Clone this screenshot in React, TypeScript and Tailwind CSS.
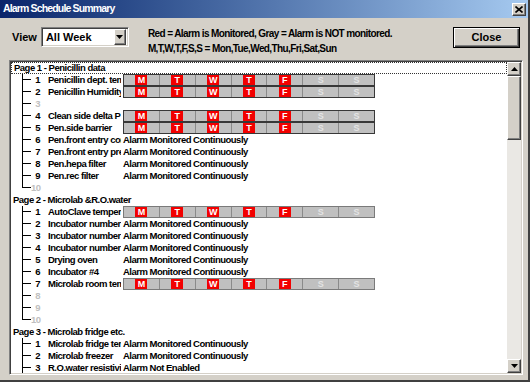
import React from 'react';

// Alarm Schedule Summary – Win2000 style dialog

type Status = 'bar' | 'cont' | 'off';

type Row =
  | { kind: 'page'; label: string; focus?: boolean }
  | { kind: 'item'; n: number; name?: string; status?: Status; last?: boolean; tone?: 'dark' | 'light' };

const rows: Row[] = [
  { kind: 'page', label: 'Page 1 - Penicillin data', focus: true },
  { kind: 'item', n: 1, name: 'Penicillin dept. temp', status: 'bar', tone: 'dark' },
  { kind: 'item', n: 2, name: 'Penicillin Humidity', status: 'bar', tone: 'dark' },
  { kind: 'item', n: 3 },
  { kind: 'item', n: 4, name: 'Clean side delta P', status: 'bar', tone: 'dark' },
  { kind: 'item', n: 5, name: 'Pen.side barrier', status: 'bar', tone: 'dark' },
  { kind: 'item', n: 6, name: 'Pen.front entry corridor', status: 'cont' },
  { kind: 'item', n: 7, name: 'Pen.front entry pressure', status: 'cont' },
  { kind: 'item', n: 8, name: 'Pen.hepa filter', status: 'cont' },
  { kind: 'item', n: 9, name: 'Pen.rec filter', status: 'cont' },
  { kind: 'item', n: 10, last: true },
  { kind: 'page', label: 'Page 2 - Microlab &R.O.water' },
  { kind: 'item', n: 1, name: 'AutoClave temperature', status: 'bar', tone: 'light' },
  { kind: 'item', n: 2, name: 'Incubator number 1', status: 'cont' },
  { kind: 'item', n: 3, name: 'Incubator number 2', status: 'cont' },
  { kind: 'item', n: 4, name: 'Incubator number 3', status: 'cont' },
  { kind: 'item', n: 5, name: 'Drying oven', status: 'cont' },
  { kind: 'item', n: 6, name: 'Incubator #4', status: 'cont' },
  { kind: 'item', n: 7, name: 'Microlab room temp', status: 'bar', tone: 'light' },
  { kind: 'item', n: 8 },
  { kind: 'item', n: 9 },
  { kind: 'item', n: 10, last: true },
  { kind: 'page', label: 'Page 3 - Microlab fridge etc.' },
  { kind: 'item', n: 1, name: 'Microlab fridge temp', status: 'cont' },
  { kind: 'item', n: 2, name: 'Microlab freezer', status: 'cont' },
  { kind: 'item', n: 3, name: 'R.O.water resistivity', status: 'off' },
];

const days = [
  { d: 'M', on: true },
  { d: 'T', on: true },
  { d: 'W', on: true },
  { d: 'T', on: true },
  { d: 'F', on: true },
  { d: 'S', on: false },
  { d: 'S', on: false },
];

const raised =
  'border border-t-white border-l-white border-r-[#404040] border-b-[#404040] shadow-[inset_-1px_-1px_#808080] bg-[#d4d0c8]';
const sunken =
  'border border-t-[#808080] border-l-[#808080] border-r-white border-b-white shadow-[inset_1px_1px_#404040,inset_-1px_-1px_#d4d0c8]';

function ScheduleBar({ tone }: { tone?: 'dark' | 'light' }) {
  return (
    <div
      className={`flex h-[12px] w-[252px] shrink-0 border tracking-normal ${
        tone === 'dark' ? 'border-[#383838]' : 'border-[#7a7a7a]'
      }`}
    >
      {days.map((day, i) => (
        <div
          key={i}
          className={`flex flex-1 justify-center bg-[#c0c0c0] ${i > 0 ? 'border-l border-[#8a8a8a]' : ''}`}
        >
          <span
            className={`w-[12px] text-center text-[9px] leading-[10px] ${
              day.on ? 'bg-[#f20000] text-white' : 'text-[#e4e4e4]'
            }`}
          >
            {day.d}
          </span>
        </div>
      ))}
    </div>
  );
}

function TreeRow({ row }: { row: Row }) {
  if (row.kind === 'page') {
    return (
      <div
        className={`flex h-[12px] items-center pl-[2px] leading-[12px] ${
          row.focus ? 'border border-dotted border-[#333]' : ''
        }`}
      >
        {row.label}
      </div>
    );
  }
  const empty = !row.name;
  return (
    <div className="flex h-[12px] items-center leading-[12px]">
      <div className="ml-[11px] flex h-full w-[9px] shrink-0 flex-col">
        <div className="h-[6px] border-b border-l border-black" />
        <div className={`flex-1 ${row.last ? '' : 'border-l border-black'}`} />
      </div>
      <span className={`w-[9px] shrink-0 text-right ${empty ? 'text-[#c0c0c0]' : ''}`}>{row.n}</span>
      <span className="ml-[8px] mr-[2px] w-[73px] shrink-0 overflow-hidden whitespace-nowrap">{row.name}</span>
      {row.status === 'bar' && <ScheduleBar tone={row.tone} />}
      {row.status === 'cont' && <span className="whitespace-nowrap">Alarm Monitored Continuously</span>}
      {row.status === 'off' && <span className="whitespace-nowrap">Alarm Not Enabled</span>}
    </div>
  );
}

function Arrow({ up }: { up?: boolean }) {
  return (
    <svg width="7" height="4" viewBox="0 0 7 4">
      <path d={up ? 'M3.5 0 L7 4 L0 4 Z' : 'M0 0 L7 0 L3.5 4 Z'} fill="#000" />
    </svg>
  );
}

export default function App() {
  return (
    <div className="flex h-[382px] w-[530px] flex-col overflow-hidden border-r-2 border-b-2 border-r-[#404040] border-b-[#404040] bg-[#d4d0c8] font-['Liberation_Sans',Arial,sans-serif] font-bold text-black">
      {/* title bar */}
      <div className="flex h-[18px] shrink-0 items-center justify-between bg-linear-to-r from-[#0a246a] to-[#a6caf0] pl-[3px] pr-[2px]">
        <span className="text-[10.5px] tracking-[-0.85px] text-white">Alarm Schedule Summary</span>
        <div className={`flex h-[13px] w-[14px] items-center justify-center ${raised}`}>
          <svg width="8" height="7" viewBox="0 0 8 7">
            <path d="M0.5 0.5 L7.5 6.5 M7.5 0.5 L0.5 6.5" stroke="#000" strokeWidth="1.6" />
          </svg>
        </div>
      </div>

      {/* header */}
      <div className="flex h-[42px] shrink-0 items-start pt-[8px]">
        <div className="ml-[12px] mt-[1px] flex h-[20px] items-center gap-[4px] text-[11px]">
          <span>View</span>
          <div className={`flex h-[20px] w-[88px] items-center justify-between bg-white pl-[4px] pr-[2px] ${sunken}`}>
            <span>All Week</span>
            <div className={`flex h-[16px] w-[12px] items-center justify-center ${raised}`}>
              <Arrow />
            </div>
          </div>
        </div>
        <div className="ml-[19px] flex flex-col text-[10px] leading-[15px] tracking-[-0.6px]">
          <span>Red = Alarm is Monitored, Gray = Alarm is NOT monitored.</span>
          <span>M,T,W,T,F,S,S = Mon,Tue,Wed,Thu,Fri,Sat,Sun</span>
        </div>
        <div className="ml-auto mr-[8px] mt-[1px] flex h-[21px] w-[67px] shrink-0 items-center justify-center border border-black bg-[#d4d0c8] text-[11px] shadow-[inset_1px_1px_#fff,inset_-1px_-1px_#404040,inset_-2px_-2px_#808080]">
          Close
        </div>
      </div>

      {/* list */}
      <div className={`ml-[9px] mr-[5px] flex h-[315px] shrink-0 bg-white p-[1px] ${sunken}`}>
        <div className="flex-1 overflow-hidden text-[9.5px] tracking-[-0.5px]">
          {rows.map((r, i) => (
            <TreeRow key={i} row={r} />
          ))}
        </div>
        <div className="flex w-[14px] flex-col bg-[#eae8e4]">
          <div className={`flex h-[14px] items-center justify-center ${raised}`}>
            <Arrow up />
          </div>
          <div className={`h-[64px] ${raised}`} />
          <div className="flex-1" />
          <div className={`flex h-[14px] items-center justify-center ${raised}`}>
            <Arrow />
          </div>
        </div>
      </div>
    </div>
  );
}
